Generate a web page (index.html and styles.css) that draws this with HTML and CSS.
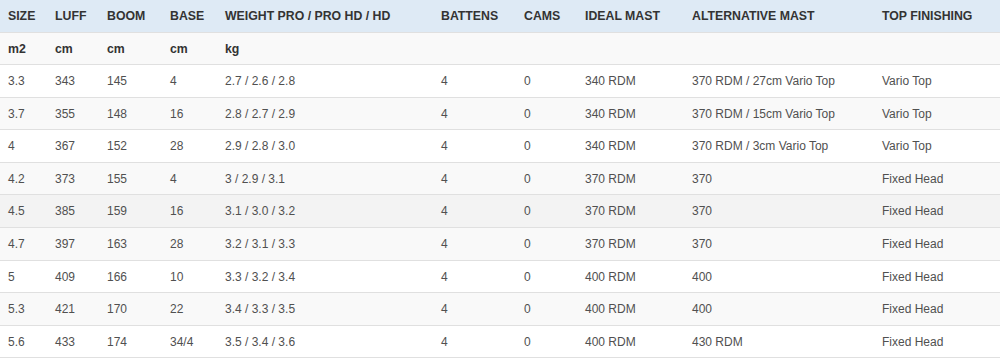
FILE: index.html
```html
<!DOCTYPE html>
<html>
<head>
<meta charset="utf-8">
<link rel="stylesheet" href="styles.css">
</head>
<body>
<table class="specs">
  <colgroup>
    <col class="c-size"><col class="c-luff"><col class="c-boom"><col class="c-base"><col class="c-weight"><col class="c-battens"><col class="c-cams"><col class="c-ideal"><col class="c-alt"><col class="c-top">
  </colgroup>
  <thead>
    <tr>
      <th>SIZE</th><th>LUFF</th><th>BOOM</th><th>BASE</th><th>WEIGHT PRO / PRO HD / HD</th><th>BATTENS</th><th>CAMS</th><th>IDEAL MAST</th><th>ALTERNATIVE MAST</th><th>TOP FINISHING</th>
    </tr>
  </thead>
  <tbody>
    <tr class="units">
      <td>m2</td><td>cm</td><td>cm</td><td>cm</td><td>kg</td><td></td><td></td><td></td><td></td><td></td>
    </tr>
    <tr><td>3.3</td><td>343</td><td>145</td><td>4</td><td>2.7 / 2.6 / 2.8</td><td>4</td><td>0</td><td>340 RDM</td><td>370 RDM / 27cm Vario Top</td><td>Vario Top</td></tr>
    <tr class="stripe"><td>3.7</td><td>355</td><td>148</td><td>16</td><td>2.8 / 2.7 / 2.9</td><td>4</td><td>0</td><td>340 RDM</td><td>370 RDM / 15cm Vario Top</td><td>Vario Top</td></tr>
    <tr><td>4</td><td>367</td><td>152</td><td>28</td><td>2.9 / 2.8 / 3.0</td><td>4</td><td>0</td><td>340 RDM</td><td>370 RDM / 3cm Vario Top</td><td>Vario Top</td></tr>
    <tr class="stripe"><td>4.2</td><td>373</td><td>155</td><td>4</td><td>3 / 2.9 / 3.1</td><td>4</td><td>0</td><td>370 RDM</td><td>370</td><td>Fixed Head</td></tr>
    <tr class="hover"><td>4.5</td><td>385</td><td>159</td><td>16</td><td>3.1 / 3.0 / 3.2</td><td>4</td><td>0</td><td>370 RDM</td><td>370</td><td>Fixed Head</td></tr>
    <tr class="stripe"><td>4.7</td><td>397</td><td>163</td><td>28</td><td>3.2 / 3.1 / 3.3</td><td>4</td><td>0</td><td>370 RDM</td><td>370</td><td>Fixed Head</td></tr>
    <tr><td>5</td><td>409</td><td>166</td><td>10</td><td>3.3 / 3.2 / 3.4</td><td>4</td><td>0</td><td>400 RDM</td><td>400</td><td>Fixed Head</td></tr>
    <tr class="stripe"><td>5.3</td><td>421</td><td>170</td><td>22</td><td>3.4 / 3.3 / 3.5</td><td>4</td><td>0</td><td>400 RDM</td><td>400</td><td>Fixed Head</td></tr>
    <tr><td>5.6</td><td>433</td><td>174</td><td>34/4</td><td>3.5 / 3.4 / 3.6</td><td>4</td><td>0</td><td>400 RDM</td><td>430 RDM</td><td>Fixed Head</td></tr>
  </tbody>
</table>
</body>
</html>
```

FILE: styles.css
```css
html, body {
  margin: 0;
  padding: 0;
  background: #fff;
}

.specs {
  width: 1000px;
  border-collapse: collapse;
  table-layout: fixed;
  font-family: "Liberation Sans", Arial, sans-serif;
  font-size: 12px;
  color: #505050;
  border-bottom: 1px solid #e0e0e0;
}

.c-size { width: 47px; }
.c-luff { width: 52px; }
.c-boom { width: 63px; }
.c-base { width: 55px; }
.c-weight { width: 216px; }
.c-battens { width: 83px; }
.c-cams { width: 61px; }
.c-ideal { width: 107px; }
.c-alt { width: 190px; }
.c-top { width: 126px; }

.specs th {
  background: #deeaf5;
  color: #333;
  font-weight: bold;
  font-size: 12.3px;
  text-align: left;
  height: 32px;
  padding: 0 8px;
  box-sizing: border-box;
  white-space: nowrap;
}

.specs td {
  padding: 9px 8px 7px;
  line-height: 15.6px;
  border-top: 1px solid #e0e0e0;
  white-space: nowrap;
  text-align: left;
}

.specs .units td {
  color: #333;
  font-weight: bold;
  font-size: 12.3px;
  background: #f9f9f9;
}

.specs .stripe td {
  background: #f9f9f9;
}

.specs .hover td {
  background: #f3f3f3;
}
```
